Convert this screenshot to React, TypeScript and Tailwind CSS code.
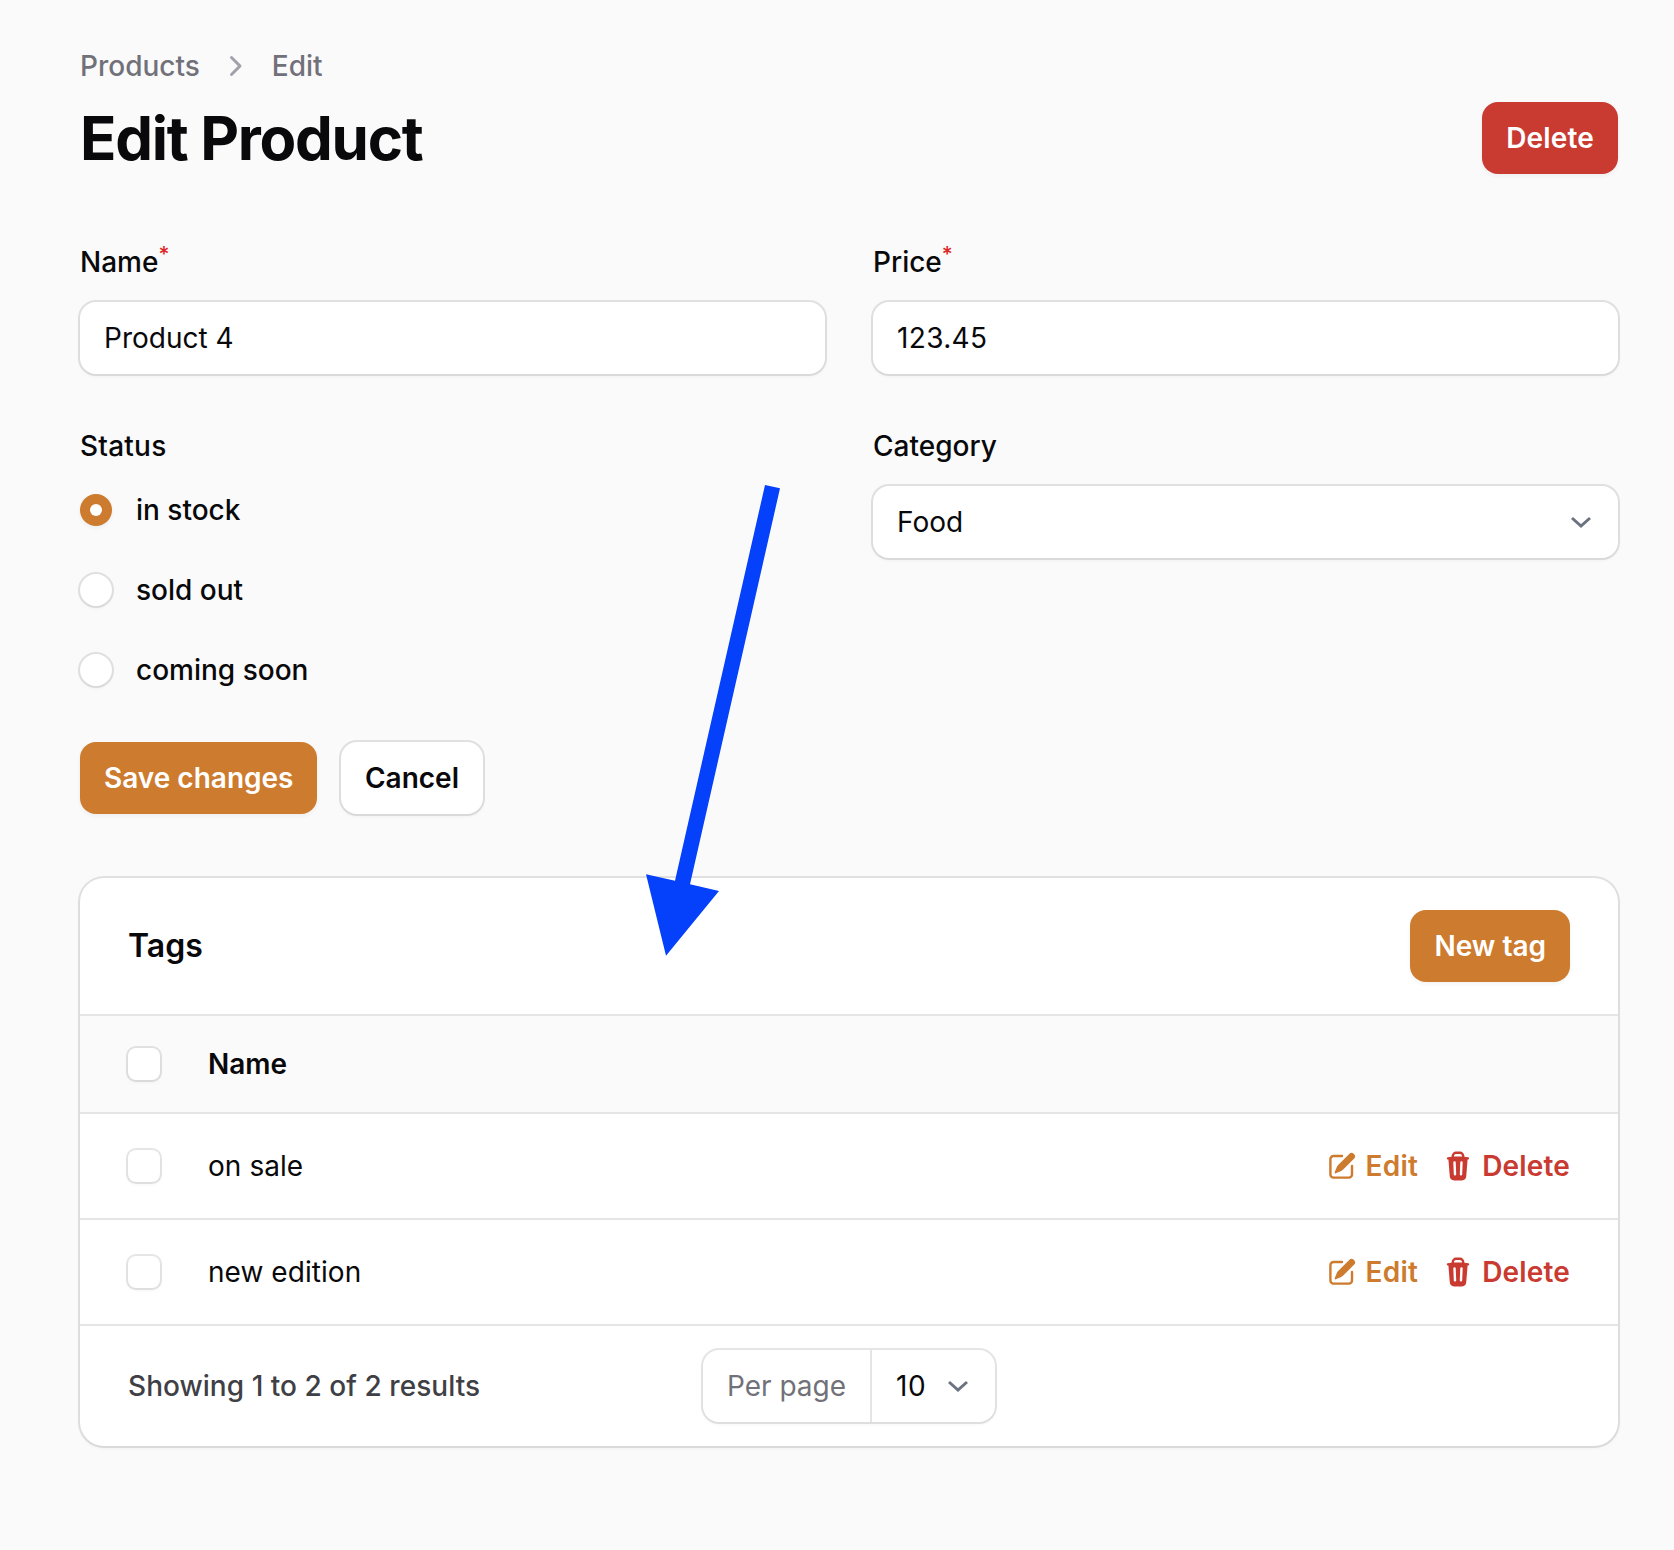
import React from "react";
import { HiMiniPencilSquare, HiMiniTrash, HiMiniChevronRight } from "react-icons/hi2";

const ring = "shadow-[0_0_0_2px_rgba(9,9,11,0.1),0_2px_4px_rgba(0,0,0,0.05)]";

function Chevron({ className }: { className?: string }) {
  return (
    <svg width="22" height="12" viewBox="0 0 22 12" fill="none" className={className}>
      <path d="M2 2l9 8 9-8" stroke="#6b7280" strokeWidth="3" />
    </svg>
  );
}

function Label({ text, required, className }: { text: string; required?: boolean; className?: string }) {
  return (
    <div className={`h-10 text-[28px] leading-10 font-medium text-[#09090b] ${className ?? ""}`}>
      {text}
      {required && <sup className="text-[#dc2626] font-medium">*</sup>}
    </div>
  );
}

function TextInput({ value, className }: { value: string; className?: string }) {
  return (
    <div className={`mt-5 h-[72px] flex items-center justify-between rounded-2xl bg-white px-6 text-[28px] text-[#09090b] ${ring} ${className ?? ""}`}>
      {value}
    </div>
  );
}

function Radio({ label, checked }: { label: string; checked?: boolean }) {
  return (
    <div className="flex h-10 items-center gap-6">
      {checked ? (
        <span className="flex h-8 w-8 items-center justify-center rounded-full bg-[#cd7b2e] shadow-[0_2px_4px_rgba(0,0,0,0.05)]">
          <span className="h-3 w-3 rounded-full bg-white" />
        </span>
      ) : (
        <span className={`h-8 w-8 rounded-full bg-white ${ring}`} />
      )}
      <span className="text-[28px] leading-10 font-medium text-[#09090b]">{label}</span>
    </div>
  );
}

function Checkbox() {
  return <span className={`block h-8 w-8 rounded-lg bg-white ${ring}`} />;
}

function Row({ name }: { name: string }) {
  return (
    <div className="box-content flex h-[104px] items-center border-b-2 border-[#e5e5e6] px-12">
      <Checkbox />
      <span className="ml-12 flex-1 text-[28px] tracking-[0.002em] text-[#09090b]">{name}</span>
      <span className="flex items-center gap-2 text-[28px] font-semibold tracking-[0.009em] text-[#cd7b2e]">
        <HiMiniPencilSquare size={32} />
        Edit
      </span>
      <span className="ml-6 flex items-center gap-2 text-[28px] font-semibold tracking-[0.006em] text-[#c93a31]">
        <HiMiniTrash size={32} />
        Delete
      </span>
    </div>
  );
}

export default function App() {
  return (
    <div className="relative min-h-[1550px] bg-[#fafafa] pl-20 pr-14 pt-[46px] font-['Inter',sans-serif]">
      <nav className="flex h-10 items-center gap-4 text-[28px] font-medium text-[#71717a]">
        <span>Products</span>
        <HiMiniChevronRight size={40} className="-mx-0.5 text-[#a1a1aa]" />
        <span className="ml-1">Edit</span>
      </nav>

      <header className="mt-4 flex h-[72px] items-center justify-between">
        <h1 className="text-[60px] leading-[72px] font-bold tracking-[-0.0215em] text-[#09090b]">Edit Product</h1>
        <button className="h-[72px] rounded-2xl bg-[#c93a31] px-6 text-[28px] font-semibold tracking-[0.006em] text-white shadow-[0_2px_4px_rgba(0,0,0,0.05)]">
          Delete
        </button>
      </header>

      <div className="mt-[68px] grid grid-cols-2 gap-x-12 gap-y-[52px]">
        <div>
          <Label text="Name" required />
          <TextInput value="Product 4" />
        </div>
        <div>
          <Label text="Price" required />
          <TextInput value="123.45" className="tracking-[0.012em]" />
        </div>
        <div>
          <Label text="Status" className="tracking-[0.008em]" />
          <div className="mt-6 flex flex-col gap-10">
            <Radio label="in stock" checked />
            <Radio label="sold out" />
            <Radio label="coming soon" />
          </div>
        </div>
        <div>
          <Label text="Category" />
          <div className={`mt-5 flex h-[72px] items-center justify-between rounded-2xl bg-white pl-6 pr-[26px] text-[28px] text-[#09090b] ${ring}`}>
            Food
            <Chevron />
          </div>
        </div>
      </div>

      <div className="mt-[52px] flex gap-6">
        <button className="h-[72px] rounded-2xl bg-[#cd7b2e] px-6 text-[28px] font-semibold text-white shadow-[0_2px_4px_rgba(0,0,0,0.05)]">
          Save changes
        </button>
        <button className={`h-[72px] rounded-2xl bg-white px-[23.5px] text-[28px] font-semibold text-[#09090b] ${ring}`}>
          Cancel
        </button>
      </div>

      <section className={`mt-16 overflow-hidden rounded-3xl bg-white ${ring}`}>
        <div className="box-content flex h-[136px] items-center justify-between border-b-2 border-[#e5e5e6] px-12">
          <h2 className="text-[32px] font-semibold text-[#09090b]">Tags</h2>
          <button className="h-[72px] rounded-2xl bg-[#cd7b2e] px-6 text-[28px] font-semibold text-white shadow-[0_2px_4px_rgba(0,0,0,0.05)]">
            New tag
          </button>
        </div>
        <div className="box-content flex h-24 items-center border-b-2 border-[#e5e5e6] bg-[#fafafa] px-12">
          <Checkbox />
          <span className="ml-12 text-[28px] font-semibold text-[#09090b]">Name</span>
        </div>
        <Row name="on sale" />
        <Row name="new edition" />
        <div className="grid h-[120px] grid-cols-3 items-center px-12">
          <span className="text-[28px] font-medium tracking-[0.0015em] text-[#3f3f46]">Showing 1 to 2 of 2 results</span>
          <div className="flex justify-center">
            <div className={`flex h-[72px] items-center rounded-2xl bg-white text-[28px] ${ring}`}>
              <span className="flex h-full items-center border-r-2 border-[#e5e5e6] px-6 text-[#71717a]">Per page</span>
              <span className="flex items-center pl-6 pr-[26px] tracking-[0.018em] text-[#09090b]">
                10
                <Chevron className="ml-[21px]" />
              </span>
            </div>
          </div>
        </div>
      </section>

      <svg className="pointer-events-none absolute left-0 top-0" width="1674" height="1550" viewBox="0 0 1674 1550" fill="none">
        <polygon
          points="765,485 780,488.3 690,884.3 719,891 666,955.7 646,874.3 675,880.7"
          fill="#0540fa"
        />
      </svg>
    </div>
  );
}
